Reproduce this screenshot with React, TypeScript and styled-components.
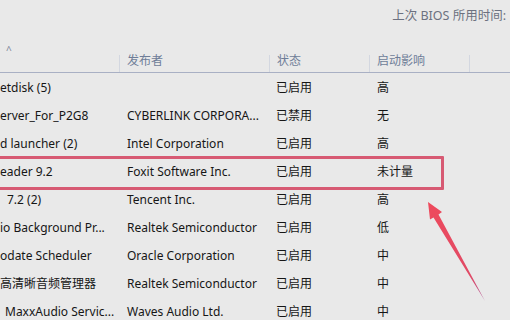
import { createGlobalStyle } from "styled-components";
import styled from "styled-components";

const GlobalStyle = createGlobalStyle`
  html, body {
    margin: 0;
    padding: 0;
    background: #e9e9e9;
  }
  body {
    font-family: "Noto Sans", "Noto Sans CJK SC", sans-serif;
    font-size: 12px;
    color: #161616;
  }
`;

const Page = styled.div`
  position: relative;
  width: 510px;
  height: 320px;
  overflow: hidden;
  background: #e9e9e9;
`;

const TopBar = styled.div`
  height: 40px;
  display: flex;
  justify-content: flex-end;
  padding: 5px 4px 0 0;
  box-sizing: border-box;
  color: #6c7180;
  font-size: 12.5px;
`;

const Header = styled.div`
  display: grid;
  grid-template-columns: 120px 150px 100px 100px 40px;
  height: 33px;
  border-bottom: 1px solid #a9b0c4;
  box-sizing: border-box;
`;

const HeadCell = styled.div<{ $sep?: boolean }>`
  position: relative;
  display: flex;
  align-items: flex-end;
  padding: 0 0 3px 7px;
  color: #6e7d98;

  &::after {
    content: "";
    display: ${(p) => (p.$sep ? "block" : "none")};
    position: absolute;
    right: 0;
    top: 15px;
    bottom: 0;
    width: 1px;
    background: #d3d7e0;
  }
`;

const Caret = styled.span`
  position: absolute;
  left: 6px;
  top: 3px;
  font-size: 10px;
  color: #7a8599;
`;

const Row = styled.div`
  display: grid;
  grid-template-columns: 120px 150px 100px 100px 40px;
  height: 28px;
  align-items: center;
`;

const Cell = styled.div<{ $indent?: number }>`
  white-space: nowrap;
  overflow: hidden;
  padding-left: ${(p) => p.$indent ?? 7}px;
`;

const Highlight = styled.div`
  position: absolute;
  left: -6px;
  top: 156px;
  width: 444px;
  height: 28px;
  border: 3px solid #d75a73;
  border-radius: 1px;
`;

const Arrow = styled.svg`
  position: absolute;
  left: 0;
  top: 0;
`;

type Item = {
  name: string;
  indent?: number;
  publisher: string;
  status: string;
  impact: string;
};

const items: Item[] = [
  { name: "etdisk (5)", indent: 0, publisher: "", status: "已启用", impact: "高" },
  { name: "erver_For_P2G8", indent: 0, publisher: "CYBERLINK CORPORA...", status: "已禁用", impact: "无" },
  { name: "d launcher (2)", indent: 0, publisher: "Intel Corporation", status: "已启用", impact: "高" },
  { name: "eader 9.2", indent: 0, publisher: "Foxit Software Inc.", status: "已启用", impact: "未计量" },
  { name: "7.2 (2)", indent: 7, publisher: "Tencent Inc.", status: "已启用", impact: "高" },
  { name: "io Background Pr...", indent: 0, publisher: "Realtek Semiconductor", status: "已启用", impact: "低" },
  { name: "odate Scheduler", indent: 0, publisher: "Oracle Corporation", status: "已启用", impact: "中" },
  { name: "高清晰音频管理器", indent: 0, publisher: "Realtek Semiconductor", status: "已启用", impact: "中" },
  { name: "MaxxAudio Servic...", indent: 5, publisher: "Waves Audio Ltd.", status: "已启用", impact: "中" },
];

export default function App() {
  return (
    <Page>
      <GlobalStyle />
      <TopBar>上次 BIOS 所用时间:</TopBar>
      <Header>
        <HeadCell $sep>
          <Caret>^</Caret>
        </HeadCell>
        <HeadCell $sep>发布者</HeadCell>
        <HeadCell $sep>状态</HeadCell>
        <HeadCell $sep>启动影响</HeadCell>
        <HeadCell />
      </Header>
      {items.map((it) => (
        <Row key={it.name}>
          <Cell $indent={it.indent}>{it.name}</Cell>
          <Cell>{it.publisher}</Cell>
          <Cell $indent={6}>{it.status}</Cell>
          <Cell>{it.impact}</Cell>
          <Cell />
        </Row>
      ))}
      <Highlight />
      <Arrow width="510" height="320" viewBox="0 0 510 320">
        <defs>
          <linearGradient id="ag" x1="428" y1="202" x2="485" y2="301" gradientUnits="userSpaceOnUse">
            <stop offset="0" stopColor="#ee4a5c" />
            <stop offset="0.75" stopColor="#e04a66" />
            <stop offset="1" stopColor="#b05a9a" />
          </linearGradient>
        </defs>
        <polygon
          points="428,202 442,212 438.5,214.5 485,301 433.5,217.5 430,219.5"
          fill="url(#ag)"
        />
      </Arrow>
    </Page>
  );
}
